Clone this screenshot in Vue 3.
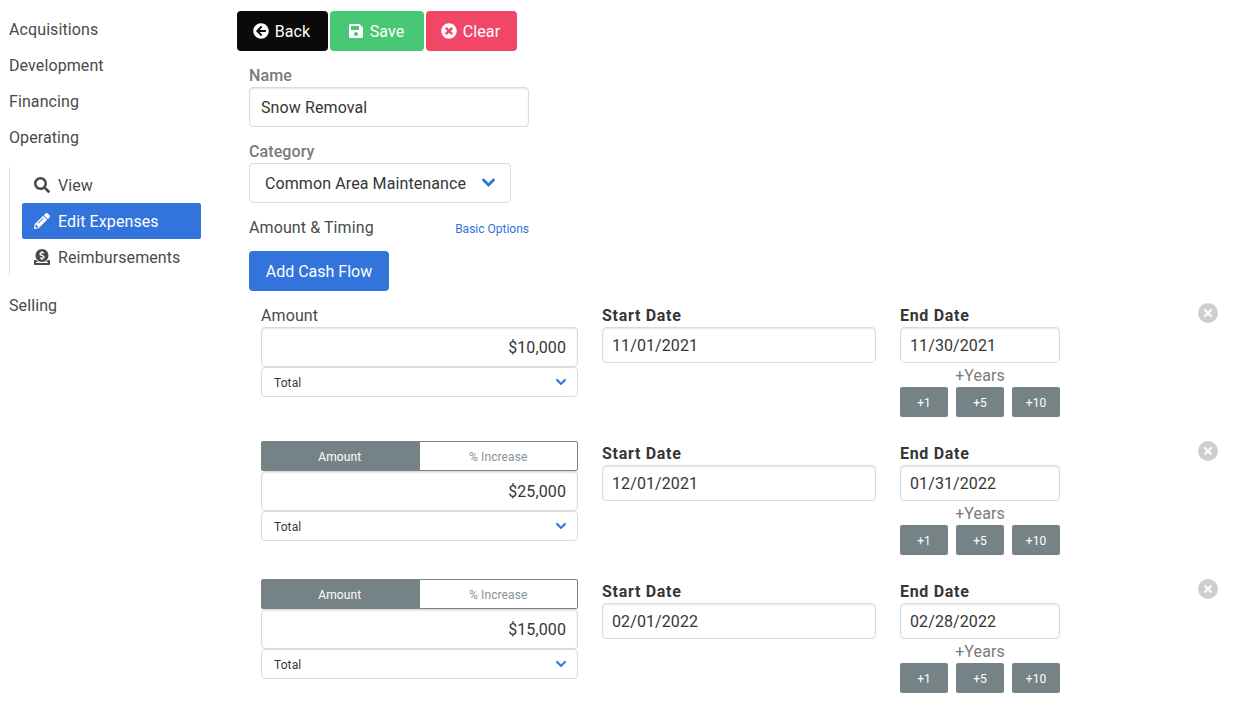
<template>
  <div class="page">
    <aside class="menu">
      <a v-for="item in topItems" :key="item" class="menu-link">{{ item }}</a>
      <ul class="submenu">
        <li v-for="item in subItems" :key="item.label">
          <a class="menu-link" :class="{ 'is-active': item.active }">
            <svg class="sub-icon" :viewBox="icons[item.icon].box"><path :d="icons[item.icon].d" /></svg>
            <span>{{ item.label }}</span>
          </a>
        </li>
      </ul>
      <a class="menu-link">Selling</a>
    </aside>

    <main class="content">
      <div class="actions">
        <button v-for="a in actions" :key="a.label" class="btn" :class="a.cls">
          <svg class="btn-icon" :viewBox="icons[a.icon].box"><path :d="icons[a.icon].d" /></svg>
          <span>{{ a.label }}</span>
        </button>
      </div>

      <div class="form">
        <label class="muted-label">Name</label>
        <input class="input name-input" value="Snow Removal" />

        <label class="muted-label">Category</label>
        <div class="select-wrap category">
          <select class="select"><option>Common Area Maintenance</option></select>
          <svg class="chevron" :viewBox="icons.chevron.box"><path :d="icons.chevron.d" /></svg>
        </div>

        <div class="timing-head">
          <span>Amount &amp; Timing</span>
          <a class="basic-link">Basic Options</a>
        </div>

        <button class="add-btn">Add Cash Flow</button>

        <div v-for="(row, i) in rows" :key="i" class="flow-row">
          <div class="col-amount">
            <div v-if="i === 0" class="plain-label">Amount</div>
            <div v-else class="toggle">
              <span class="toggle-on">Amount</span>
              <span class="toggle-off">% Increase</span>
            </div>
            <input class="input amount-input" :value="row.amount" />
            <div class="select-wrap small">
              <select class="select"><option>Total</option></select>
              <svg class="chevron" :viewBox="icons.chevron.box"><path :d="icons.chevron.d" /></svg>
            </div>
          </div>

          <div class="col-start">
            <div class="bold-label">Start Date</div>
            <input class="input date-input" :value="row.start" />
          </div>

          <div class="col-end">
            <div class="bold-label">End Date</div>
            <input class="input date-input" :value="row.end" />
            <div class="years">+Years</div>
            <div class="year-btns">
              <button v-for="y in years" :key="y" class="year-btn">{{ y }}</button>
            </div>
          </div>

          <button class="delete" aria-label="remove"></button>
        </div>
      </div>
    </main>
  </div>
</template>

<script setup>
const topItems = ['Acquisitions', 'Development', 'Financing', 'Operating']
const subItems = [
  { label: 'View', icon: 'search' },
  { label: 'Edit Expenses', icon: 'pencil', active: true },
  { label: 'Reimbursements', icon: 'donate' }
]
const actions = [
  { label: 'Back', icon: 'back', cls: 'btn-black' },
  { label: 'Save', icon: 'save', cls: 'btn-green' },
  { label: 'Clear', icon: 'clear', cls: 'btn-red' }
]
const rows = [
  { amount: '$10,000', start: '11/01/2021', end: '11/30/2021' },
  { amount: '$25,000', start: '12/01/2021', end: '01/31/2022' },
  { amount: '$15,000', start: '02/01/2022', end: '02/28/2022' }
]
const years = ['+1', '+5', '+10']

const icons = {
  search: {
    box: '0 0 512 512',
    d: 'M505 442.7L405.3 343c-4.5-4.5-10.6-7-17-7H372c27.6-35.3 44-79.7 44-128C416 93.1 322.9 0 208 0S0 93.1 0 208s93.1 208 208 208c48.3 0 92.7-16.4 128-44v16.3c0 6.4 2.5 12.5 7 17l99.7 99.7c9.4 9.4 24.6 9.4 33.9 0l28.3-28.3c9.4-9.4 9.4-24.6.1-34zM208 336c-70.7 0-128-57.2-128-128 0-70.7 57.2-128 128-128 70.7 0 128 57.2 128 128 0 70.7-57.2 128-128 128z'
  },
  pencil: {
    box: '0 0 512 512',
    d: 'M497.9 142.1l-46.1 46.1c-4.7 4.7-12.3 4.7-17 0l-111-111c-4.7-4.7-4.7-12.3 0-17l46.1-46.1c18.7-18.7 49.1-18.7 67.9 0l60.1 60.1c18.8 18.7 18.8 49.1 0 67.9zM284.2 99.8L21.6 362.4.4 483.9c-2.9 16.4 11.4 30.6 27.8 27.8l121.5-21.3 262.6-262.6c4.7-4.7 4.7-12.3 0-17l-111-111c-4.8-4.7-12.4-4.7-17.1 0zM124.1 339.9c-5.5-5.5-5.5-14.3 0-19.8l154-154c5.5-5.5 14.3-5.5 19.8 0s5.5 14.3 0 19.8l-154 154c-5.5 5.5-14.3 5.5-19.8 0zM88 424h48v36.3l-64.5 11.3-31.1-31.1L51.7 376H88v48z'
  },
  donate: {
    box: '0 0 512 512',
    d: 'M256 416c114.9 0 208-93.1 208-208S370.9 0 256 0 48 93.1 48 208s93.1 208 208 208zM233.8 97.4V80.6c0-9.2 7.4-16.6 16.6-16.6h11.1c9.2 0 16.6 7.4 16.6 16.6v17c15.5.8 30.5 6.1 43 15.4 5.6 4.1 6.2 12.3 1.2 17.1L306 145.6c-3.8 3.7-9.5 3.8-14 1-5.4-3.4-11.4-5.1-17.8-5.1h-38.9c-9 0-16.3 8.2-16.3 18.3 0 8.2 5 15.5 12.1 17.6l62.3 18.7c25.7 7.7 43.7 32.4 43.7 60.1 0 34-26.4 61.5-59.1 62.4v16.8c0 9.2-7.4 16.6-16.6 16.6h-11.1c-9.2 0-16.6-7.4-16.6-16.6v-17c-15.5-.8-30.5-6.1-43-15.4-5.6-4.1-6.2-12.3-1.2-17.1l16.3-15.5c3.8-3.7 9.5-3.8 14-1 5.4 3.4 11.4 5.1 17.8 5.1h38.9c9 0 16.3-8.2 16.3-18.3 0-8.2-5-15.5-12.1-17.6l-62.3-18.7c-25.7-7.7-43.7-32.4-43.7-60.1.1-34 26.4-61.5 59.1-62.4zM480 352h-32.5c-19.6 26-44.6 47.7-73 64h63.8c5.3 0 9.6 3.6 9.6 8v16c0 4.4-4.3 8-9.6 8H73.6c-5.3 0-9.6-3.6-9.6-8v-16c0-4.4 4.3-8 9.6-8h63.8c-28.4-16.3-53.3-38-73-64H32c-17.7 0-32 14.3-32 32v96c0 17.7 14.3 32 32 32h448c17.7 0 32-14.3 32-32v-96c0-17.7-14.3-32-32-32z'
  },
  back: {
    box: '0 0 512 512',
    d: 'M256 504C119 504 8 393 8 256S119 8 256 8s248 111 248 248-111 248-248 248zm28.9-143.6L209.4 288H392c13.3 0 24-10.7 24-24v-16c0-13.3-10.7-24-24-24H209.4l75.5-72.4c9.7-9.3 9.9-24.8.4-34.3l-11-10.9c-9.4-9.4-24.6-9.4-33.9 0L107.7 239c-9.4 9.4-9.4 24.6 0 33.9l132.7 132.7c9.4 9.4 24.6 9.4 33.9 0l11-10.9c9.5-9.5 9.3-25-.4-34.3z'
  },
  save: {
    box: '0 0 448 512',
    d: 'M433.941 129.941l-83.882-83.882A48 48 0 0 0 316.118 32H48C21.49 32 0 53.49 0 80v352c0 26.51 21.49 48 48 48h352c26.51 0 48-21.49 48-48V163.882a48 48 0 0 0-14.059-33.941zM224 416c-35.346 0-64-28.654-64-64 0-35.346 28.654-64 64-64s64 28.654 64 64c0 35.346-28.654 64-64 64zm96-304.52V212c0 6.627-5.373 12-12 12H76c-6.627 0-12-5.373-12-12V108c0-6.627 5.373-12 12-12h228.52c3.183 0 6.235 1.264 8.485 3.515l3.48 3.48A11.996 11.996 0 0 1 320 111.48z'
  },
  clear: {
    box: '0 0 512 512',
    d: 'M256 8C119 8 8 119 8 256s111 248 248 248 248-111 248-248S393 8 256 8zm121.6 313.1c4.7 4.7 4.7 12.3 0 17L338 377.6c-4.7 4.7-12.3 4.7-17 0L256 312l-65.1 65.6c-4.7 4.7-12.3 4.7-17 0L134.4 338c-4.7-4.7-4.7-12.3 0-17l65.6-65-65.6-65.1c-4.7-4.7-4.7-12.3 0-17l39.6-39.6c4.7-4.7 12.3-4.7 17 0l65 65.7 65.1-65.6c4.7-4.7 12.3-4.7 17 0l39.6 39.6c4.7 4.7 4.7 12.3 0 17L312 256l65.6 65.1z'
  },
  chevron: {
    box: '0 0 448 512',
    d: 'M207.029 381.476L12.686 187.132c-9.373-9.373-9.373-24.569 0-33.941l22.667-22.667c9.357-9.357 24.522-9.375 33.901-.04L224 284.505l154.745-154.021c9.379-9.335 24.544-9.317 33.901.04l22.667 22.667c9.373 9.373 9.373 24.569 0 33.941L240.971 381.476c-9.373 9.372-24.569 9.372-33.942 0z'
  }
}
</script>

<style>
html, body {
  background: #fff;
}
</style>

<style scoped>
.page {
  display: flex;
  align-items: flex-start;
  font-family: Roboto, "Noto Sans", sans-serif;
  font-size: 16px;
  line-height: 26px;
  letter-spacing: 0.1px;
  color: #4a4a4a;
}

.menu {
  width: 213px;
  flex: none;
  padding: 11px 12px 0 9px;
  box-sizing: border-box;
}

.menu-link {
  display: block;
  height: 36px;
  line-height: 38px;
}

.submenu {
  list-style: none;
  margin: 12px 0;
  padding: 0 0 0 12px;
  border-left: 1px solid #dbdbdb;
}

.submenu .menu-link {
  display: flex;
  align-items: center;
  gap: 8px;
  padding-left: 12px;
  border-radius: 2px;
}

.submenu .menu-link span {
  padding-top: 2px;
}

.submenu .is-active {
  background: #3273dc;
  color: #fff;
}

.sub-icon {
  width: 16px;
  height: 16px;
  fill: #4a4a4a;
}

.is-active .sub-icon {
  fill: #fff;
}

.content {
  flex: 1;
  padding: 11px 22px 0 24px;
}

.actions {
  display: flex;
  gap: 2px;
}

.btn {
  display: flex;
  align-items: center;
  justify-content: center;
  gap: 6px;
  height: 40px;
  padding: 0 2px 0 0;
  border: 0;
  border-radius: 4px;
  color: #fff;
  font: inherit;
  letter-spacing: inherit;
}

.btn span {
  padding-top: 1px;
}

.btn-black { width: 91px; background: #0a0a0a; }
.btn-green { width: 94px; background: #48c774; }
.btn-red { width: 91px; background: #f14668; }

.btn-icon {
  width: 16px;
  height: 16px;
  fill: #fff;
}

.form {
  padding-left: 12px;
  margin-top: 12px;
}

.muted-label {
  display: block;
  height: 24px;
  color: #7a7a7a;
  font-weight: 500;
}

.input {
  display: block;
  box-sizing: border-box;
  width: 100%;
  border: 1px solid #dbdbdb;
  border-radius: 4px;
  box-shadow: inset 0 1px 2px rgba(10, 10, 10, 0.1);
  background: #fff;
  font: inherit;
  letter-spacing: inherit;
  color: #363636;
  outline: none;
}

.name-input {
  width: 280px;
  height: 40px;
  padding: 0 11px;
  margin-bottom: 12px;
}

.select-wrap {
  position: relative;
}

.select {
  display: block;
  width: 100%;
  height: 100%;
  box-sizing: border-box;
  appearance: none;
  background: #fff;
  border: 1px solid #dbdbdb;
  border-radius: 4px;
  padding-top: 2px;
  font: inherit;
  letter-spacing: inherit;
  color: #363636;
  outline: none;
}

.chevron {
  position: absolute;
  top: 50%;
  fill: #3273dc;
  stroke: #3273dc;
  stroke-width: 24;
  pointer-events: none;
}

.category {
  width: 262px;
  height: 40px;
}

.category .select {
  padding-left: 15px;
}

.category .chevron {
  right: 16px;
  width: 13px;
  height: 15px;
  margin-top: -8px;
}

.timing-head {
  display: flex;
  align-items: flex-start;
  justify-content: space-between;
  width: 280px;
  height: 24px;
  margin-top: 12px;
}

.basic-link {
  margin-top: 4px;
  font-size: 12px;
  line-height: 20px;
  letter-spacing: 0;
  color: #3273dc;
}

.add-btn {
  display: block;
  width: 140px;
  height: 40px;
  margin-top: 12px;
  padding: 2px 0 0;
  border: 0;
  border-radius: 4px;
  background: #3273dc;
  color: #fff;
  font: inherit;
  letter-spacing: 0;
}

.flow-row {
  display: flex;
  align-items: flex-start;
  padding-left: 12px;
  margin-bottom: 24px;
}

.add-btn + .flow-row {
  margin-top: 12px;
}

.col-amount {
  width: 317px;
  flex: none;
}

.col-start {
  width: 274px;
  flex: none;
  margin-left: 24px;
}

.col-end {
  width: 160px;
  flex: none;
  margin-left: 24px;
}

.plain-label,
.bold-label {
  height: 24px;
}

.bold-label {
  font-weight: 700;
  letter-spacing: 0.7px;
  color: #363636;
}

.toggle {
  display: flex;
  height: 30px;
  font-size: 12px;
  line-height: 32px;
  text-align: center;
}

.toggle-on,
.toggle-off {
  flex: 1;
  box-sizing: border-box;
}

.toggle-on {
  background: #768386;
  color: #fff;
  border-radius: 2px 0 0 2px;
}

.toggle-off {
  border: 1px solid #768386;
  border-radius: 0 2px 2px 0;
  line-height: 30px;
  color: #87929a;
}

.amount-input {
  height: 40px;
  padding: 0 11px;
  text-align: right;
}

.small {
  height: 30px;
}

.small .select {
  padding-left: 12px;
  font-size: 12px;
}

.small .chevron {
  right: 12px;
  width: 10px;
  height: 12px;
  margin-top: -6px;
}

.date-input {
  height: 36px;
  padding: 0 9px;
}

.years {
  height: 24px;
  text-align: center;
  color: #7a7a7a;
}

.year-btns {
  display: flex;
  justify-content: space-between;
}

.year-btn {
  width: 48px;
  height: 30px;
  padding: 2px 0 0;
  border: 0;
  border-radius: 2px;
  background: #768386;
  color: #fff;
  font: inherit;
  font-size: 12px;
}

.delete {
  position: relative;
  flex: none;
  width: 20px;
  height: 20px;
  margin: 0 0 0 auto;
  padding: 0;
  border: 0;
  border-radius: 50%;
  background: rgba(10, 10, 10, 0.2);
}

.delete::before,
.delete::after {
  content: '';
  position: absolute;
  top: 50%;
  left: 50%;
  background: #fff;
  transform: translate(-50%, -50%) rotate(45deg);
}

.delete::before {
  width: 10px;
  height: 2px;
}

.delete::after {
  width: 2px;
  height: 10px;
}
</style>
